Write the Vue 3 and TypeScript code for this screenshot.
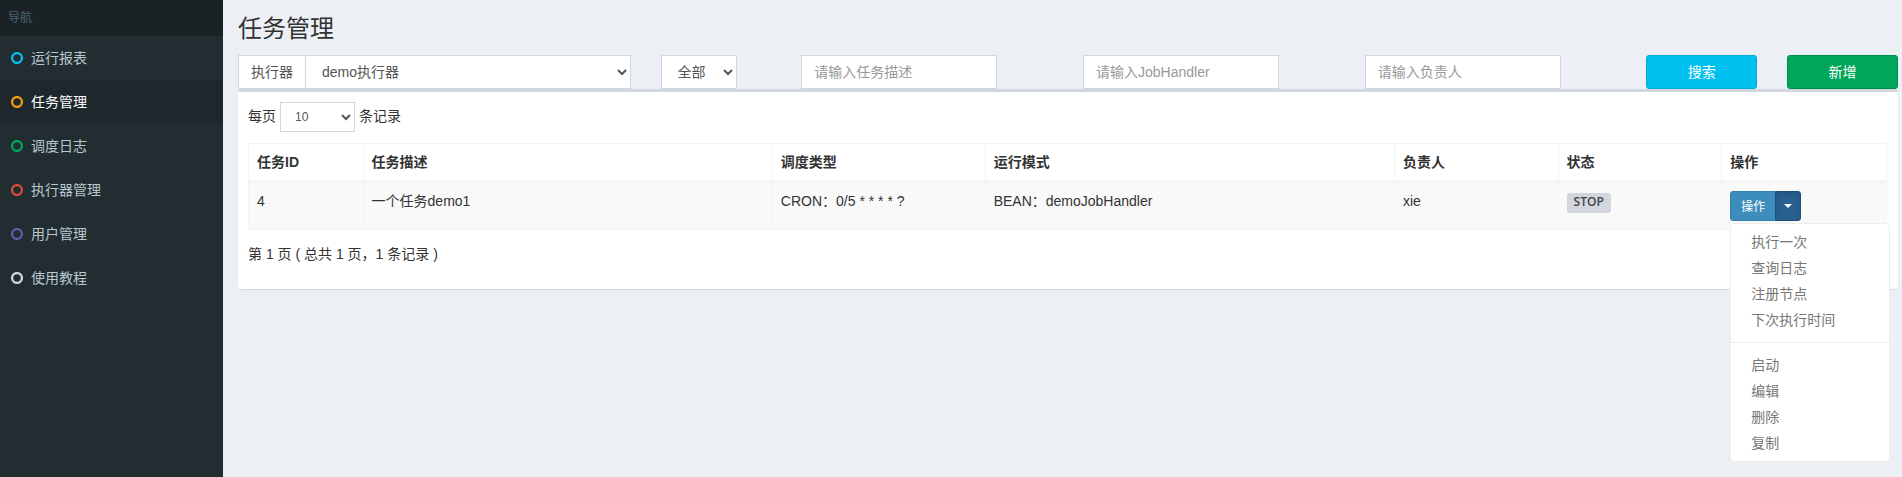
<script setup lang="ts">
import { ref } from 'vue'

interface NavItem {
  label: string
  tone: string
}

interface Job {
  id: number
  desc: string
  schedule: string
  mode: string
  owner: string
  status: string
}

const navItems: NavItem[] = [
  { label: '运行报表', tone: 'aqua' },
  { label: '任务管理', tone: 'yellow' },
  { label: '调度日志', tone: 'green' },
  { label: '执行器管理', tone: 'red' },
  { label: '用户管理', tone: 'purple' },
  { label: '使用教程', tone: 'gray' },
]
const activeNav = ref('任务管理')

const columns = ['任务ID', '任务描述', '调度类型', '运行模式', '负责人', '状态', '操作']
const jobs: Job[] = [
  {
    id: 4,
    desc: '一个任务demo1',
    schedule: 'CRON：0/5 * * * * ?',
    mode: 'BEAN：demoJobHandler',
    owner: 'xie',
    status: 'STOP',
  },
]

const menuGroups = [
  ['执行一次', '查询日志', '注册节点', '下次执行时间'],
  ['启动', '编辑', '删除', '复制'],
]

const executor = ref('demo执行器')
const triggerStatus = ref('全部')
const jobDesc = ref('')
const handler = ref('')
const owner = ref('')
const pageSize = ref('10')
const openMenu = ref<number | null>(4)

function toggleMenu(id: number) {
  openMenu.value = openMenu.value === id ? null : id
}
</script>

<template>
  <div class="layout">
    <aside class="sidebar">
      <div class="nav-header">导航</div>
      <nav>
        <a
          v-for="item in navItems"
          :key="item.label"
          href="#"
          class="nav-link"
          :class="{ active: item.label === activeNav }"
          @click.prevent="activeNav = item.label"
        >
          <svg class="ring" :class="item.tone" viewBox="0 0 12 12" aria-hidden="true">
            <circle cx="6" cy="6" r="4.9" />
          </svg>
          <span>{{ item.label }}</span>
        </a>
      </nav>
    </aside>

    <main class="content">
      <h1>任务管理</h1>

      <form class="filters" @submit.prevent>
        <div class="group span-3">
          <label class="addon" for="executor">执行器</label>
          <select id="executor" v-model="executor" class="control grow">
            <option>demo执行器</option>
          </select>
        </div>
        <div class="group span-1">
          <select v-model="triggerStatus" class="control state" aria-label="状态">
            <option>全部</option>
          </select>
        </div>
        <div class="group span-2">
          <input v-model="jobDesc" type="text" class="control text" placeholder="请输入任务描述" aria-label="任务描述" />
        </div>
        <div class="group span-2">
          <input v-model="handler" type="text" class="control text" placeholder="请输入JobHandler" aria-label="JobHandler" />
        </div>
        <div class="group span-2">
          <input v-model="owner" type="text" class="control text" placeholder="请输入负责人" aria-label="负责人" />
        </div>
        <button type="submit" class="btn info span-1">搜索</button>
        <button type="button" class="btn success span-1">新增</button>
      </form>

      <section class="box">
        <div class="length">
          <label for="page-size">每页</label>
          <select id="page-size" v-model="pageSize" class="control small">
            <option>10</option>
          </select>
          <span>条记录</span>
        </div>

        <table>
          <colgroup>
            <col class="w7" />
            <col class="w25" />
            <col class="w13" />
            <col class="w25" />
            <col class="w10" />
            <col class="w10" />
            <col class="w10" />
          </colgroup>
          <thead>
            <tr>
              <th v-for="c in columns" :key="c" scope="col">{{ c }}</th>
            </tr>
          </thead>
          <tbody>
            <tr v-for="job in jobs" :key="job.id">
              <td>{{ job.id }}</td>
              <td>{{ job.desc }}</td>
              <td>{{ job.schedule }}</td>
              <td>{{ job.mode }}</td>
              <td>{{ job.owner }}</td>
              <td><span class="status">{{ job.status }}</span></td>
              <td>
                <div class="actions">
                  <button type="button" class="action-main">操作</button>
                  <button
                    type="button"
                    class="action-toggle"
                    aria-label="更多操作"
                    :aria-expanded="openMenu === job.id"
                    @click="toggleMenu(job.id)"
                  >
                    <span class="caret"></span>
                  </button>
                  <ul v-if="openMenu === job.id" class="menu">
                    <template v-for="(group, g) in menuGroups" :key="g">
                      <li v-if="g > 0" class="divider" role="separator"></li>
                      <li v-for="entry in group" :key="entry">
                        <a href="#" @click.prevent>{{ entry }}</a>
                      </li>
                    </template>
                  </ul>
                </div>
              </td>
            </tr>
          </tbody>
        </table>

        <p class="summary">第 1 页 ( 总共 1 页，1 条记录 )</p>
      </section>
    </main>
  </div>
</template>

<style>
body {
  margin: 0;
  background: #ecf0f5;
}
</style>

<style scoped>
* {
  box-sizing: border-box;
}

.layout {
  display: flex;
  min-height: 100vh;
  color: #333;
  font-family: "Liberation Sans", "Noto Sans CJK SC", sans-serif;
  font-size: 14px;
  line-height: 20px;
}

.sidebar {
  flex: 0 0 223px;
  background: #222d32;
}

.nav-header {
  padding: 8px;
  background: #1a2226;
  color: #4b646f;
  font-size: 12px;
}

.nav-link {
  display: flex;
  align-items: center;
  gap: 8px;
  height: 44px;
  padding: 0 11px;
  color: #b8c7ce;
  text-decoration: none;
}

.nav-link.active {
  background: #1e282c;
  color: #fff;
}

.ring {
  width: 12px;
  height: 12px;
  fill: none;
  stroke: currentColor;
  stroke-width: 2.3;
}

.ring.aqua { color: #00c0ef; }
.ring.yellow { color: #f39c12; }
.ring.green { color: #00a65a; }
.ring.red { color: #dd4b39; }
.ring.purple { color: #605ca8; }
.ring.gray { color: #d2d6de; }

.content {
  flex: 1;
  min-width: 0;
  padding: 15px 4px 0 15px;
}

h1 {
  margin: 0 0 12px;
  font-size: 24px;
  font-weight: 400;
  line-height: 28px;
}

.filters {
  display: grid;
  grid-template-columns: repeat(12, minmax(0, 1fr));
  column-gap: 30px;
}

.span-1 { grid-column: span 1; }
.span-2 { grid-column: span 2; }
.span-3 { grid-column: span 3; }

.group {
  display: flex;
}

.addon {
  padding: 6px 12px;
  border: 1px solid #d2d6de;
  border-right: 0;
  background: #fff;
  color: #555;
  white-space: nowrap;
}

.control {
  height: 34px;
  padding: 6px 12px;
  border: 1px solid #d2d6de;
  border-radius: 0;
  background-color: #fff;
  color: #555;
  font-family: inherit;
  font-size: 14px;
  line-height: 20px;
}

.grow {
  flex: 1;
  min-width: 0;
}

.state {
  min-width: 76px;
}

.text {
  width: 196px;
  max-width: 100%;
}

.control::placeholder {
  color: #999;
}

.btn {
  height: 34px;
  padding: 0 12px 2px;
  border: 1px solid;
  border-radius: 3px;
  color: #fff;
  font-family: inherit;
  font-size: 14px;
}

.info {
  border-color: #00acd6;
  background: #00c0ef;
}

.success {
  border-color: #008d4c;
  background: #00a65a;
}

.box {
  padding: 10px 11px 25px 10px;
  border-top: 3px solid #d2d6de;
  border-radius: 3px;
  background: #fff;
  box-shadow: 0 1px 1px rgba(0, 0, 0, 0.1);
}

.length {
  display: flex;
  align-items: baseline;
  gap: 4px;
  margin-bottom: 11px;
}

.small {
  width: 75px;
  height: 30px;
  padding: 5px 10px;
  font-size: 12px;
}

table {
  width: 100%;
  border: 1px solid #f4f4f4;
  border-collapse: separate;
  border-spacing: 0;
  table-layout: fixed;
}

.w7 { width: 7%; }
.w10 { width: 10%; }
.w13 { width: 13%; }
.w25 { width: 25%; }

th,
td {
  padding: 8px;
  border-right: 1px solid #f4f4f4;
  text-align: left;
  vertical-align: top;
}

th {
  border-bottom: 3px solid #f4f4f4;
  font-weight: 700;
}

th:last-child,
td:last-child {
  border-right: 0;
}

td {
  background: #f9f9f9;
}

.status {
  display: block;
  width: max-content;
  margin-top: 2px;
  padding: 0 7px 2px;
  border-radius: 3px;
  background: #d2d6de;
  color: #444;
  font-family: "Open Sans", sans-serif;
  font-size: 12px;
  font-weight: 600;
  line-height: 18px;
}

.actions {
  display: flex;
  position: relative;
}

.action-main,
.action-toggle {
  height: 30px;
  border: 1px solid #367fa9;
  background: #3c8dbc;
  color: #fff;
  font-family: inherit;
  font-size: 12px;
}

.action-main {
  padding: 0 10px 2px;
  border-radius: 3px 0 0 3px;
}

.action-toggle {
  width: 26px;
  margin-left: -1px;
  padding: 0 8px;
  border-color: #204d74;
  border-radius: 0 3px 3px 0;
  background: #286090;
  box-shadow: inset 0 3px 5px rgba(0, 0, 0, 0.125);
}

.caret {
  display: block;
  border-top: 4px solid #fff;
  border-right: 4px solid transparent;
  border-left: 4px solid transparent;
}

.menu {
  position: absolute;
  top: 100%;
  left: 0;
  z-index: 10;
  min-width: 160px;
  margin: 2px 0 0;
  padding: 5px 0;
  border: 1px solid #eee;
  border-radius: 4px;
  background: #fff;
  list-style: none;
}

.menu a {
  display: block;
  padding: 3px 20px;
  color: #777;
  text-decoration: none;
  white-space: nowrap;
}

.divider {
  height: 1px;
  margin: 9px 0;
  background: #eee;
}

.summary {
  margin: 14px 0 0;
}
</style>
